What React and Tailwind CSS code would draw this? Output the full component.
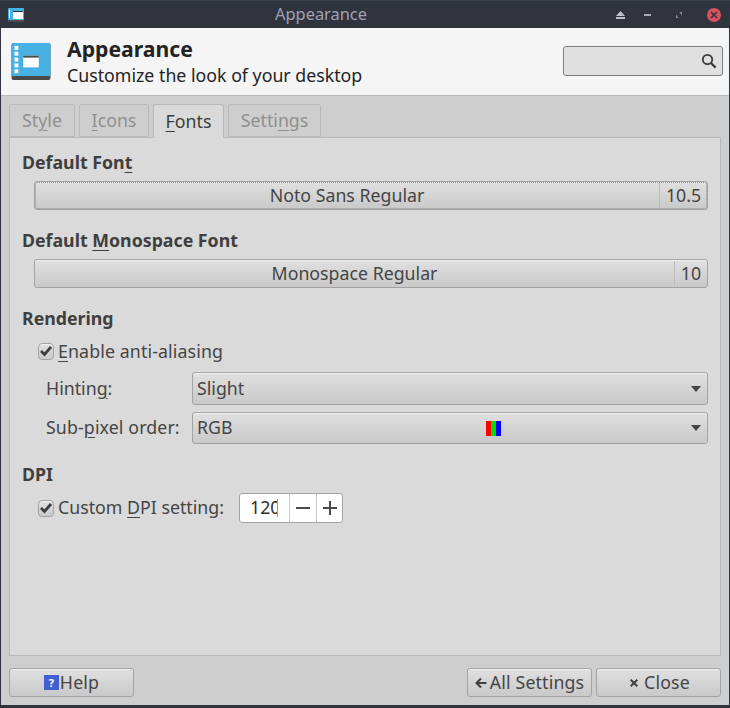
import React from 'react';

const btn = "border border-[#a3a3a3] rounded-[3px] bg-gradient-to-b from-[#e0e0e0] to-[#c9c9c9] shadow-[inset_0_1px_0_#f0f0f0]";

const AppIcon = ({ className }) => (
  <svg viewBox="0 0 40 38" className={className}>
    <rect x="0" y="0" width="40" height="38" rx="2" fill="#4a4a4a" />
    <path d="M2 0h36a2 2 0 0 1 2 2v32H0V2a2 2 0 0 1 2-2z" fill="#48b1e4" />
    <rect x="3" y="3" width="4" height="4" fill="#fff" />
    <rect x="3" y="9" width="4" height="4" fill="#fff" />
    <rect x="3" y="15" width="4" height="4" fill="#fff" />
    <rect x="3" y="21" width="4" height="4" fill="#fff" />
    <rect x="3" y="27" width="4" height="4" fill="#fff" />
    <rect x="12" y="13" width="16" height="12" fill="#fff" />
    <rect x="12" y="13" width="16" height="2" fill="#4a4a4a" />
  </svg>
);

const Tab = ({ active, children, className }) => (
  <div
    className={`${className} rounded-t-[3px] border border-[#b9b9b9] flex items-center justify-center ${
      active
        ? 'h-[34px] bg-[#dadada] border-b-0 text-[#3c3c3c] relative z-10'
        : 'h-[33px] bg-[#cecece] text-[#8f8f8f]'
    }`}
  >
    <span>{children}</span>
  </div>
);

const U = ({ children }) => <span className="underline decoration-1 underline-offset-[3px]">{children}</span>;

const Heading = ({ children, className }) => (
  <div className={`h-6 pt-px flex items-center font-bold text-[#3f3f3f] ${className}`}>
    <span>{children}</span>
  </div>
);

const FontButton = ({ name, size, sizeWidth, focused }) => (
  <div className={`${btn} mt-[7px] ml-3 h-[29px] flex items-center text-[#454545] ${focused ? 'outline-1 outline-dotted outline-[#8d8d8d] -outline-offset-2' : ''}`}>
    <div className="flex-1 text-center">{name}</div>
    <div className={`${sizeWidth} h-[25px] border-l border-[#bcbcbc] flex items-center justify-center`}>{size}</div>
  </div>
);

const Check = () => (
  <div className={`${btn} w-4 h-[17px] rounded-[4px] flex items-center justify-center`}>
    <svg viewBox="0 0 12 12" className="w-3 h-3">
      <path d="M1 6 L4.5 9.5 L11 2" fill="none" stroke="#3c3c3c" strokeWidth="2.8" />
    </svg>
  </div>
);

const Arrow = () => (
  <svg viewBox="0 0 10 6" className="w-[10px] h-[6px]">
    <path d="M0 0h10L5 6z" fill="#454545" />
  </svg>
);

const Combo = ({ children, className }) => (
  <div className={`${btn} ${className} w-[516px] flex items-center pl-1 pr-[6px] text-[#454545]`}>
    <div className="flex-1 flex items-center">{children}</div>
    <Arrow />
  </div>
);

const FooterButton = ({ className, children }) => (
  <div className={`${btn} ${className} h-[29px] flex items-center justify-center text-[#454545] tracking-[0.15px]`}>{children}</div>
);

export default function App() {
  return (
    <div className="w-[730px] h-[708px] bg-[#2f343f] border-t border-[#3d4350] pl-px pr-px pb-[3px] flex flex-col overflow-hidden font-['Noto_Sans',sans-serif] text-[17.75px] leading-none">
      <div className="h-[27px] flex items-center text-[#9ea3b0]">
        <svg viewBox="0 0 16 14" className="ml-[7px] w-4 h-[14px]">
          <rect width="16" height="14" rx="1" fill="#48b1e4" />
          <rect y="12" width="16" height="2" fill="#4a4a4a" />
          <rect x="1" y="2" width="1" height="8" fill="#fff" />
          <rect x="5" y="3" width="10" height="8" fill="#fff" />
          <rect x="5" y="3" width="10" height="1" fill="#333" />
        </svg>
        <div className="flex-1 text-center text-[16.4px] pl-[2px]">Appearance</div>
        <div className="flex items-center mr-[8px]">
          <svg viewBox="0 0 9 8" className="w-[9px] h-2">
            <path d="M4.5 0L9 5H0z M0 6h9v2H0z" fill="#bcc0cb" />
          </svg>
          <div className="ml-[19px] w-[7px] h-[2px] bg-[#a6aab5]" />
          <svg viewBox="0 0 6 6" className="ml-[25px] w-[6px] h-[6px]">
            <path d="M0 6V2.5L2.5 6z M6 0v3.5L3.5 0z" fill="#8b8f9b" />
          </svg>
          <div className="ml-[25px] w-[14px] h-[14px] rounded-full bg-[#d9525e] flex items-center justify-center">
            <svg viewBox="0 0 8 8" className="w-2 h-2">
              <path d="M1 1l6 6M7 1l-6 6" stroke="#2f343f" strokeWidth="1.7" />
            </svg>
          </div>
        </div>
      </div>

      <div className="h-[68px] bg-[#f5f5f5] border-b border-[#b9b9b9] flex items-start">
        <AppIcon className="ml-[10px] mt-[15px] w-10 h-[37px]" />
        <div className="ml-[16px] mt-[8px] text-[#232323]">
          <div className="h-[26px] flex items-center font-bold text-[21.2px]">Appearance</div>
          <div className="h-[28px] flex items-center">Customize the look of your desktop</div>
        </div>
        <div className="ml-auto mr-[6px] mt-[18px] w-[160px] h-[30px] bg-[#e0e0e0] border border-[#7f7f7f] rounded-[3px] flex items-center justify-end pr-[5px]">
          <svg viewBox="0 0 16 16" className="w-4 h-4">
            <circle cx="6.5" cy="6.5" r="4.7" fill="none" stroke="#3c3c3c" strokeWidth="1.8" />
            <path d="M10 10l4.6 4.6" stroke="#3c3c3c" strokeWidth="2.2" />
          </svg>
        </div>
      </div>

      <div className="flex-1 bg-[#cecece] flex flex-col px-2">
        <div className="mt-2 flex items-start gap-1">
          <Tab className="w-[66px]">St<U>y</U>le</Tab>
          <Tab className="w-[70px]"><U>I</U>cons</Tab>
          <Tab active className="w-[71px]"><U>F</U>onts</Tab>
          <Tab className="w-[93px]">Setti<U>n</U>gs</Tab>
        </div>
        <div className="-mt-px h-[519px] bg-[#dadada] border border-[#b9b9b9] pl-3 pr-3 flex flex-col text-[#454545]">
          <Heading className="mt-3">Default Fon<U>t</U></Heading>
          <FontButton focused name="Noto Sans Regular" size="10.5" sizeWidth="w-[48px]" />

          <Heading className="mt-[18px]">Default <U>M</U>onospace Font</Heading>
          <FontButton name="Monospace Regular" size="10" sizeWidth="w-[33px]" />

          <Heading className="mt-[18px]">Rendering</Heading>
          <div className="mt-[10px] ml-4 h-[22px] flex items-center gap-1">
            <Check />
            <span className="pt-px tracking-[0.12px]"><U>E</U>nable anti-aliasing</span>
          </div>
          <div className="mt-[10px] ml-6 flex items-center">
            <div className="w-[146px]">Hintin<U>g</U>:</div>
            <Combo className="h-[33px]">Slight</Combo>
          </div>
          <div className="mt-[7px] ml-6 flex items-center">
            <div className="w-[146px] tracking-[0.12px]">Sub-<U>p</U>ixel order:</div>
            <Combo className="h-[32px]">
              <span className="w-[289px]">RGB</span>
              <div className="flex h-[15px]">
                <div className="w-[5px] bg-[#ff0000]" />
                <div className="w-[5px] bg-[#00e000]" />
                <div className="w-[5px] bg-[#0000ff]" />
              </div>
            </Combo>
          </div>

          <Heading className="mt-[18px]">DPI</Heading>
          <div className="mt-[7px] ml-4 h-[30px] flex items-center">
            <Check />
            <span className="ml-1 w-[181px]">Custom <U>D</U>PI setting:</span>
            <div className="w-[104px] h-[30px] bg-white border border-[#a3a3a3] rounded-[3px] flex items-center">
              <div className="w-[49px] pl-[10px] flex items-center">
                <div className="w-[28px] h-[18px] flex items-center border-r border-[#9a9a9a] text-[#2e2e2e] overflow-hidden whitespace-nowrap">120</div>
              </div>
              <div className="w-[27px] h-full border-l border-[#c8c8c8] flex items-center justify-center">
                <div className="w-[14px] h-[2px] bg-[#4a4a4a]" />
              </div>
              <div className="flex-1 h-full border-l border-[#c8c8c8] flex items-center justify-center">
                <svg viewBox="0 0 14 14" className="w-[14px] h-[14px]">
                  <path d="M0 7h14M7 0v14" stroke="#4a4a4a" strokeWidth="2" />
                </svg>
              </div>
            </div>
          </div>
        </div>

        <div className="mt-3 flex items-center">
          <FooterButton className="w-[125px] gap-px">
            <div className="w-[15px] h-[15px] bg-[#3f5fd3] text-white text-[11px] font-bold flex items-center justify-center">?</div>
            <span>Help</span>
          </FooterButton>
          <FooterButton className="ml-auto w-[125px] gap-[3px]">
            <svg viewBox="0 0 12 12" className="w-3 h-3">
              <path d="M11.5 6H2M6 1.5L1.5 6 6 10.5" fill="none" stroke="#3f3f3f" strokeWidth="2" />
            </svg>
            <span>All Settings</span>
          </FooterButton>
          <FooterButton className="ml-1 w-[125px] gap-[6px] pl-[3px]">
            <svg viewBox="0 0 8 8" className="w-2 h-2">
              <path d="M0.7 0.7l6.6 6.6M7.3 0.7L0.7 7.3" stroke="#3f3f3f" strokeWidth="2" />
            </svg>
            <span>Close</span>
          </FooterButton>
        </div>
      </div>
    </div>
  );
}
